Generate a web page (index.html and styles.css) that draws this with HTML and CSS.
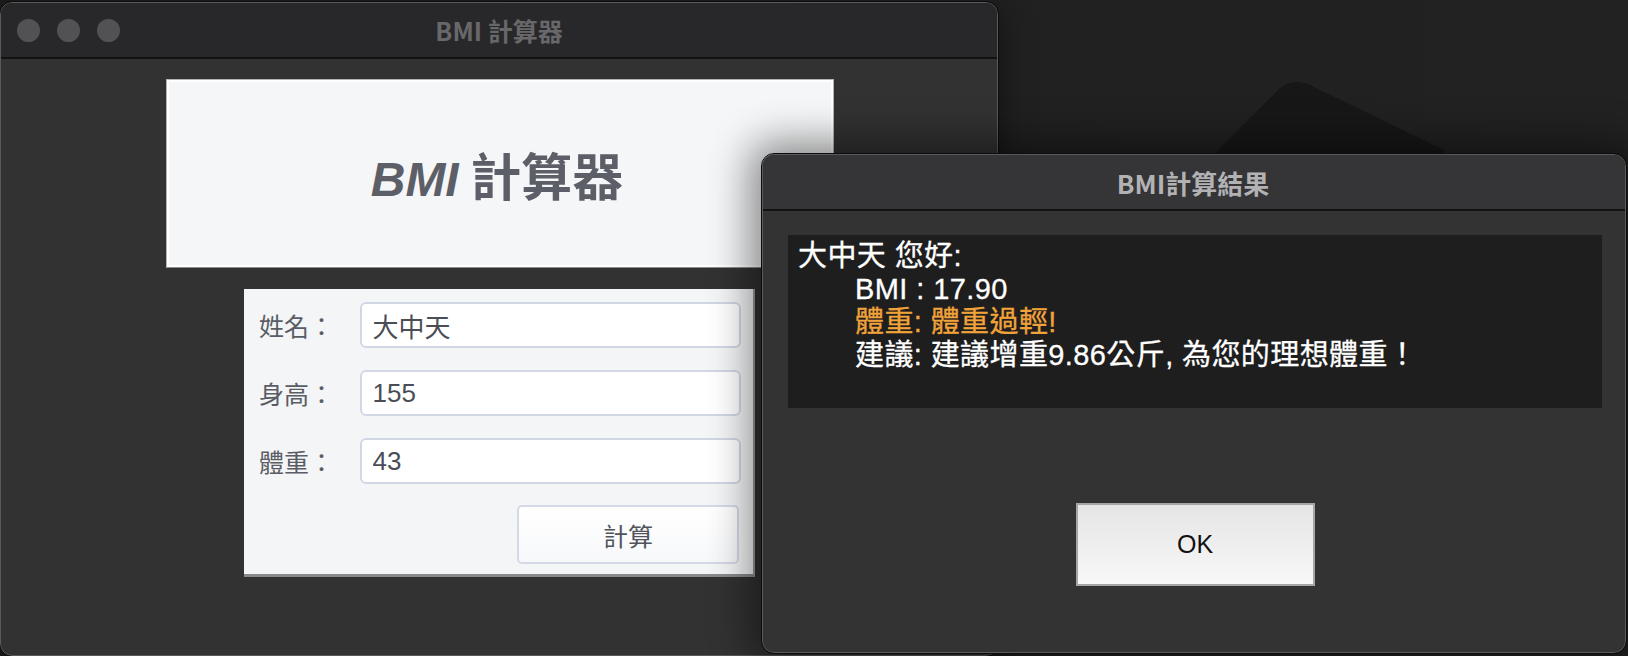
FILE: index.html
```html
<!DOCTYPE html>
<html lang="zh-Hant">
<head>
    <meta charset="UTF-8">
    <meta name="viewport" content="width=device-width, initial-scale=1.0">
    <title>BMI 計算器</title>
    <link rel="stylesheet" href="styles.css">
</head>
<body>

<div class="desktop">
    <svg class="wallpaper-shape" width="260" height="90" viewBox="0 0 260 90">
        <path d="M12 80 L80 12 Q96 0 116 12 L244 74 L244 80 Z" fill="#171717"/>
    </svg>

    <div class="window main-window">
        <div class="titlebar">
            <div class="lights">
                <span class="light"></span>
                <span class="light"></span>
                <span class="light"></span>
            </div>
            <div class="title">BMI 計算器</div>
        </div>
        <div class="content">
            <div class="header-box">
                <h1><em>BMI</em> 計算器</h1>
            </div>
            <div class="form-panel">
                <div class="form-row">
                    <label for="nameInput">姓名：</label>
                    <input id="nameInput" type="text" value="大中天">
                </div>
                <div class="form-row">
                    <label for="heightInput">身高：</label>
                    <input id="heightInput" type="text" value="155">
                </div>
                <div class="form-row">
                    <label for="weightInput">體重：</label>
                    <input id="weightInput" type="text" value="43">
                </div>
                <div class="form-actions">
                    <button class="calc-btn">計算</button>
                </div>
            </div>
        </div>
    </div>

    <div class="window dialog">
        <div class="titlebar dialog-titlebar">
            <div class="title">BMI計算結果</div>
        </div>
        <div class="dialog-body">
            <div class="result">
                <div>大中天 您好:</div>
                <div class="indent">BMI : 17.90</div>
                <div class="indent warn">體重: 體重過輕!</div>
                <div class="indent">建議: 建議增重9.86公斤, 為您的理想體重！</div>
            </div>
            <div class="dialog-actions">
                <button class="ok-btn">OK</button>
            </div>
        </div>
    </div>
</div>

</body>
</html>
```

FILE: styles.css
```css
body {
    margin: 0;
    background-color: #1f1f1f;
    font-family: "Liberation Sans", "Noto Sans CJK TC", sans-serif;
    overflow: hidden;
}
.desktop {
    position: relative;
    width: 1628px;
    height: 656px;
    background: linear-gradient(90deg, #1e1e1e, #222222);
    overflow: hidden;
}
.wallpaper-shape {
    position: absolute;
    left: 1200px;
    top: 76px;
}
.window {
    position: absolute;
    box-sizing: border-box;
    border: 1px solid #5a5a5c;
    outline: 1px solid #0c0c0c;
    border-radius: 12px;
    overflow: hidden;
    display: flex;
    flex-direction: column;
}
.main-window {
    left: 0;
    top: 2px;
    width: 998px;
    height: 654px;
    background-color: #323232;
    box-shadow: 0 6px 30px rgba(0, 0, 0, 0.5);
}
.titlebar {
    position: relative;
    height: 54px;
    flex-shrink: 0;
    display: flex;
    align-items: center;
    justify-content: center;
    background-color: #28282a;
    border-bottom: 2px solid #121212;
}
.lights {
    position: absolute;
    left: 16px;
    top: 16px;
    display: flex;
    gap: 17px;
}
.light {
    width: 23px;
    height: 23px;
    border-radius: 50%;
    background-color: #525254;
}
.title {
    font-family: "Noto Sans CJK TC", sans-serif;
    font-weight: 700;
    font-size: 25px;
    color: #68686b;
}
.content {
    display: flex;
    flex-direction: column;
    align-items: flex-start;
    padding-top: 20px;
}
.header-box {
    box-sizing: border-box;
    margin-left: 165px;
    width: 668px;
    height: 189px;
    background-color: #f5f6f7;
    border: 1px solid #b4b4b4;
    border-bottom-color: #8c8c8c;
    box-shadow: inset 0 0 0 2px #ffffff;
    display: flex;
    align-items: center;
    justify-content: center;
}
.header-box h1 {
    margin: 0 0 0 -6px;
    font-family: "Noto Sans CJK TC", sans-serif;
    font-weight: 700;
    font-size: 51px;
    color: #5d5f68;
}
.header-box h1 em {
    font-family: "Liberation Sans", sans-serif;
    font-style: italic;
    font-size: 48px;
}
.form-panel {
    box-sizing: border-box;
    margin-left: 243px;
    margin-top: 21px;
    width: 511px;
    height: 288px;
    background-color: #f4f5f6;
    border-bottom: 3px solid #8a8a8a;
    border-right: 2px solid #9a9a9a;
    padding: 13px 12px 0 15px;
    display: flex;
    flex-direction: column;
    gap: 22px;
}
.form-row {
    display: flex;
    align-items: center;
    height: 46px;
}
.form-row label {
    width: 101px;
    font-family: "Noto Sans CJK TC", sans-serif;
    font-size: 25px;
    color: #5a5d65;
}
.form-row input {
    box-sizing: border-box;
    width: 383px;
    height: 46px;
    border: 2px solid #d1d7e5;
    border-radius: 6px;
    background-color: #ffffff;
    padding: 0 11px;
    font-family: "Liberation Sans", "Noto Sans CJK TC", sans-serif;
    font-size: 26px;
    color: #4a4d55;
    outline: none;
}
.form-actions {
    display: flex;
    justify-content: flex-end;
    margin-top: -1px;
    padding-right: 2px;
}
.calc-btn {
    box-sizing: border-box;
    width: 222px;
    height: 59px;
    border: 2px solid #d3d9e6;
    border-radius: 5px;
    background: linear-gradient(#ffffff, #f7f8fa);
    font-family: "Noto Sans CJK TC", sans-serif;
    font-size: 25px;
    color: #50535b;
    cursor: pointer;
}
.dialog {
    left: 762px;
    top: 154px;
    width: 864px;
    height: 499px;
    background-color: #333333;
    box-shadow: 0 0 40px 12px rgba(0, 0, 0, 0.45);
}
.dialog-titlebar {
    background-color: #353537;
}
.dialog-titlebar .title {
    color: #b2b2b4;
    font-size: 26px;
    margin-right: 2px;
}
.dialog-body {
    display: flex;
    flex-direction: column;
    padding: 24px 23px 0 25px;
}
.result {
    box-sizing: border-box;
    height: 173px;
    background-color: #1e1e1e;
    padding: 5px 10px;
    font-size: 29px;
    line-height: 33px;
    letter-spacing: 0.4px;
    color: #ffffff;
    -webkit-text-stroke: 0.3px #ffffff;
}
.result .indent {
    padding-left: 57px;
}
.result .warn {
    color: #f0a33a;
    -webkit-text-stroke-color: #f0a33a;
}
.dialog-actions {
    display: flex;
    justify-content: center;
    margin-top: 95px;
}
.ok-btn {
    box-sizing: border-box;
    width: 239px;
    height: 83px;
    border: 2px solid #a6a6a6;
    background: linear-gradient(#e5e5e5, #f8f8f8);
    font-family: "Liberation Sans", sans-serif;
    font-size: 25px;
    color: #111111;
    cursor: pointer;
}
```
